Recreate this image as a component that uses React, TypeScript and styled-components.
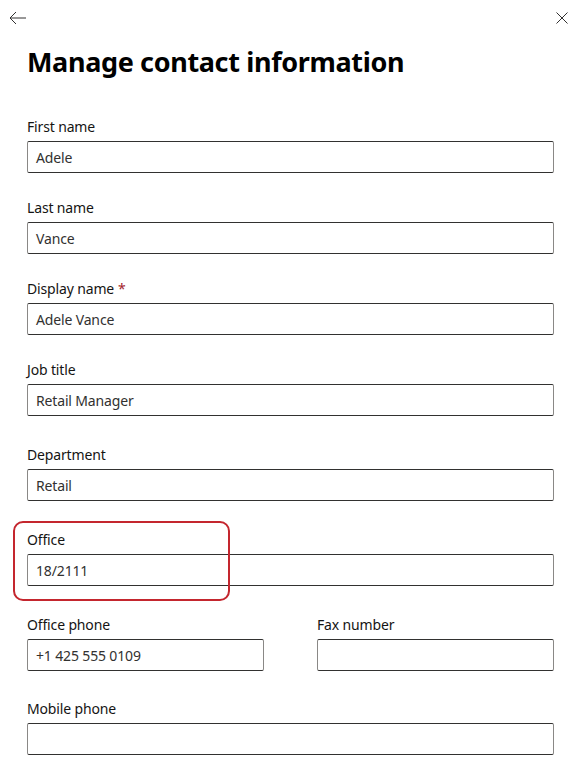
import React from "react";
import styled, { createGlobalStyle } from "styled-components";

const Global = createGlobalStyle`
  html, body { margin: 0; padding: 0; background: #ffffff; }
  body { font-family: "Noto Sans", "Open Sans", Arial, sans-serif; color: #201f1e; }
  * { box-sizing: border-box; }
`;

const Page = styled.div`
  width: 575px;
  min-height: 782px;
  background: #fff;
  padding: 0 21px 0 27px;
`;

const TopBar = styled.div`
  display: flex;
  justify-content: space-between;
  align-items: center;
  height: 35px;
  margin: 0 -18px 0 -19px;
`;

const IconButton = styled.button`
  border: none;
  background: transparent;
  padding: 0;
  width: 20px;
  height: 20px;
  display: flex;
  align-items: center;
  justify-content: center;
  color: #323130;
`;

const Title = styled.h1`
  margin: 9px 0 0;
  font-size: 27px;
  line-height: 36px;
  font-weight: 700;
  color: #000;
  letter-spacing: -0.35px;
`;

const Form = styled.div`
  display: flex;
  flex-direction: column;
  margin-top: 37px;
`;

const Field = styled.div<{ $gap: number }>`
  position: relative;
  display: flex;
  flex-direction: column;
  margin-bottom: ${(p) => p.$gap}px;
  flex: 1;
`;

const Label = styled.label`
  font-size: 14px;
  line-height: 20px;
  font-weight: 400;
  color: #151413;
  margin-bottom: 4px;
  letter-spacing: -0.15px;
`;

const Required = styled.span`
  color: #a4262c;
  margin-left: 4px;
`;

const Input = styled.div`
  height: 32px;
  border: 1px solid #323130;
  border-left-color: #8a8886;
  border-right-color: #8a8886;
  border-radius: 2px;
  padding: 0 8px;
  display: flex;
  align-items: center;
  font-size: 14px;
  color: #323130;
  letter-spacing: -0.15px;
`;

const Row = styled.div`
  display: grid;
  grid-template-columns: 237px 237px;
  justify-content: space-between;
`;

const Highlight = styled.div`
  position: absolute;
  left: -14px;
  top: -9px;
  width: 217px;
  height: 80px;
  border: 2.5px solid #c4262e;
  border-radius: 10px;
  pointer-events: none;
`;

const BackIcon = () => (
  <svg width="18" height="14" viewBox="0 0 18 14" fill="none">
    <path d="M17 7H1.5M7 1L1 7l6 6" stroke="#323130" strokeWidth="1" />
  </svg>
);

const CloseIcon = () => (
  <svg width="12" height="12" viewBox="0 0 12 12" fill="none">
    <path d="M0.5 0.5l11 11M11.5 0.5l-11 11" stroke="#323130" strokeWidth="1" />
  </svg>
);

export default function App() {
  return (
    <>
      <Global />
      <Page>
        <TopBar>
          <IconButton aria-label="Back"><BackIcon /></IconButton>
          <IconButton aria-label="Close"><CloseIcon /></IconButton>
        </TopBar>
        <Title>Manage contact information</Title>
        <Form>
          <Field $gap={25}>
            <Label>First name</Label>
            <Input>Adele</Input>
          </Field>
          <Field $gap={25}>
            <Label>Last name</Label>
            <Input>Vance</Input>
          </Field>
          <Field $gap={25}>
            <Label>Display name<Required>*</Required></Label>
            <Input>Adele Vance</Input>
          </Field>
          <Field $gap={29}>
            <Label>Job title</Label>
            <Input>Retail Manager</Input>
          </Field>
          <Field $gap={29}>
            <Label>Department</Label>
            <Input>Retail</Input>
          </Field>
          <Field $gap={29}>
            <Highlight />
            <Label>Office</Label>
            <Input>18/2111</Input>
          </Field>
          <Row>
            <Field $gap={28}>
              <Label>Office phone</Label>
              <Input>+1 425 555 0109</Input>
            </Field>
            <Field $gap={28}>
              <Label>Fax number</Label>
              <Input />
            </Field>
          </Row>
          <Field $gap={28}>
            <Label>Mobile phone</Label>
            <Input />
          </Field>
        </Form>
      </Page>
    </>
  );
}
